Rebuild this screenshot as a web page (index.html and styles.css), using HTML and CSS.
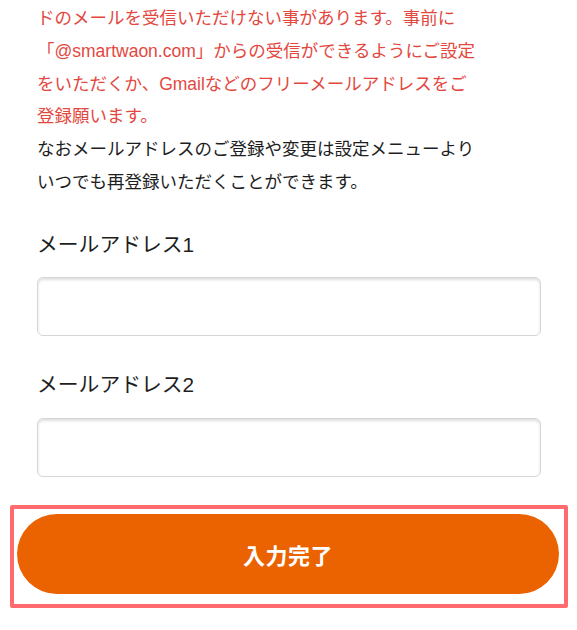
FILE: index.html
```html
<!DOCTYPE html>
<html lang="ja">
<head>
<meta charset="utf-8">
<link rel="stylesheet" href="styles.css">
</head>
<body>
<div class="page">
  <div class="notice">
    <p class="warn">ドのメールを受信いただけない事があります。事前に<br>「@smartwaon.com」からの受信ができるようにご設定<br>をいただくか、Gmailなどのフリーメールアドレスをご<br>登録願います。</p>
    <p class="info">なおメールアドレスのご登録や変更は設定メニューより<br>いつでも再登録いただくことができます。</p>
  </div>
  <div class="field field-first">
    <label class="label" for="mail1">メールアドレス1</label>
    <input class="input" id="mail1" type="email">
  </div>
  <div class="field field-second">
    <label class="label" for="mail2">メールアドレス2</label>
    <input class="input" id="mail2" type="email">
  </div>
  <div class="highlight">
    <button class="submit" type="button">入力完了</button>
  </div>
</div>
</body>
</html>
```
FILE: styles.css
```css
html, body {
  margin: 0;
  padding: 0;
  background: #ffffff;
}
body {
  font-family: "Liberation Sans", "Noto Sans CJK JP", sans-serif;
  color: #1e1e1e;
}
.page {
  width: 577px;
  height: 630px;
  overflow: hidden;
  box-sizing: border-box;
  padding-top: 2px;
}
.notice {
  padding-left: 37px;
  font-size: 17.5px;
  line-height: 32.8px;
  white-space: nowrap;
}
.notice p {
  margin: 0;
}
.warn {
  color: #e3483f;
}
.info {
  color: #1e1e1e;
}
.field {
  display: flex;
  flex-direction: column;
  padding: 0 36px 0 37px;
}
.field-first {
  margin-top: 30px;
}
.field-second {
  margin-top: 33px;
}
.label {
  font-size: 20.8px;
  line-height: 32px;
  margin-bottom: 16px;
  color: #1e1e1e;
}
.field-second .label {
  margin-bottom: 17px;
}
.input {
  display: block;
  width: 504px;
  height: 59px;
  box-sizing: border-box;
  margin: 0;
  border: 1px solid #d6d6d6;
  border-radius: 6px;
  background: #ffffff;
  box-shadow: inset 0 2px 3px rgba(0, 0, 0, 0.13);
  font-size: 18px;
}
.highlight {
  margin: 28px 9px 0 10px;
  border: 4px solid #ff6b6e;
  border-radius: 2px;
  padding: 5px 5px 10px 3px;
}
.submit {
  display: block;
  width: 100%;
  height: 80px;
  margin: 0;
  border: 0;
  border-radius: 40px;
  background: #ea6300;
  color: #ffffff;
  font-family: "Noto Sans CJK JP", sans-serif;
  font-size: 22px;
  font-weight: 700;
  letter-spacing: 0.5px;
}
```
